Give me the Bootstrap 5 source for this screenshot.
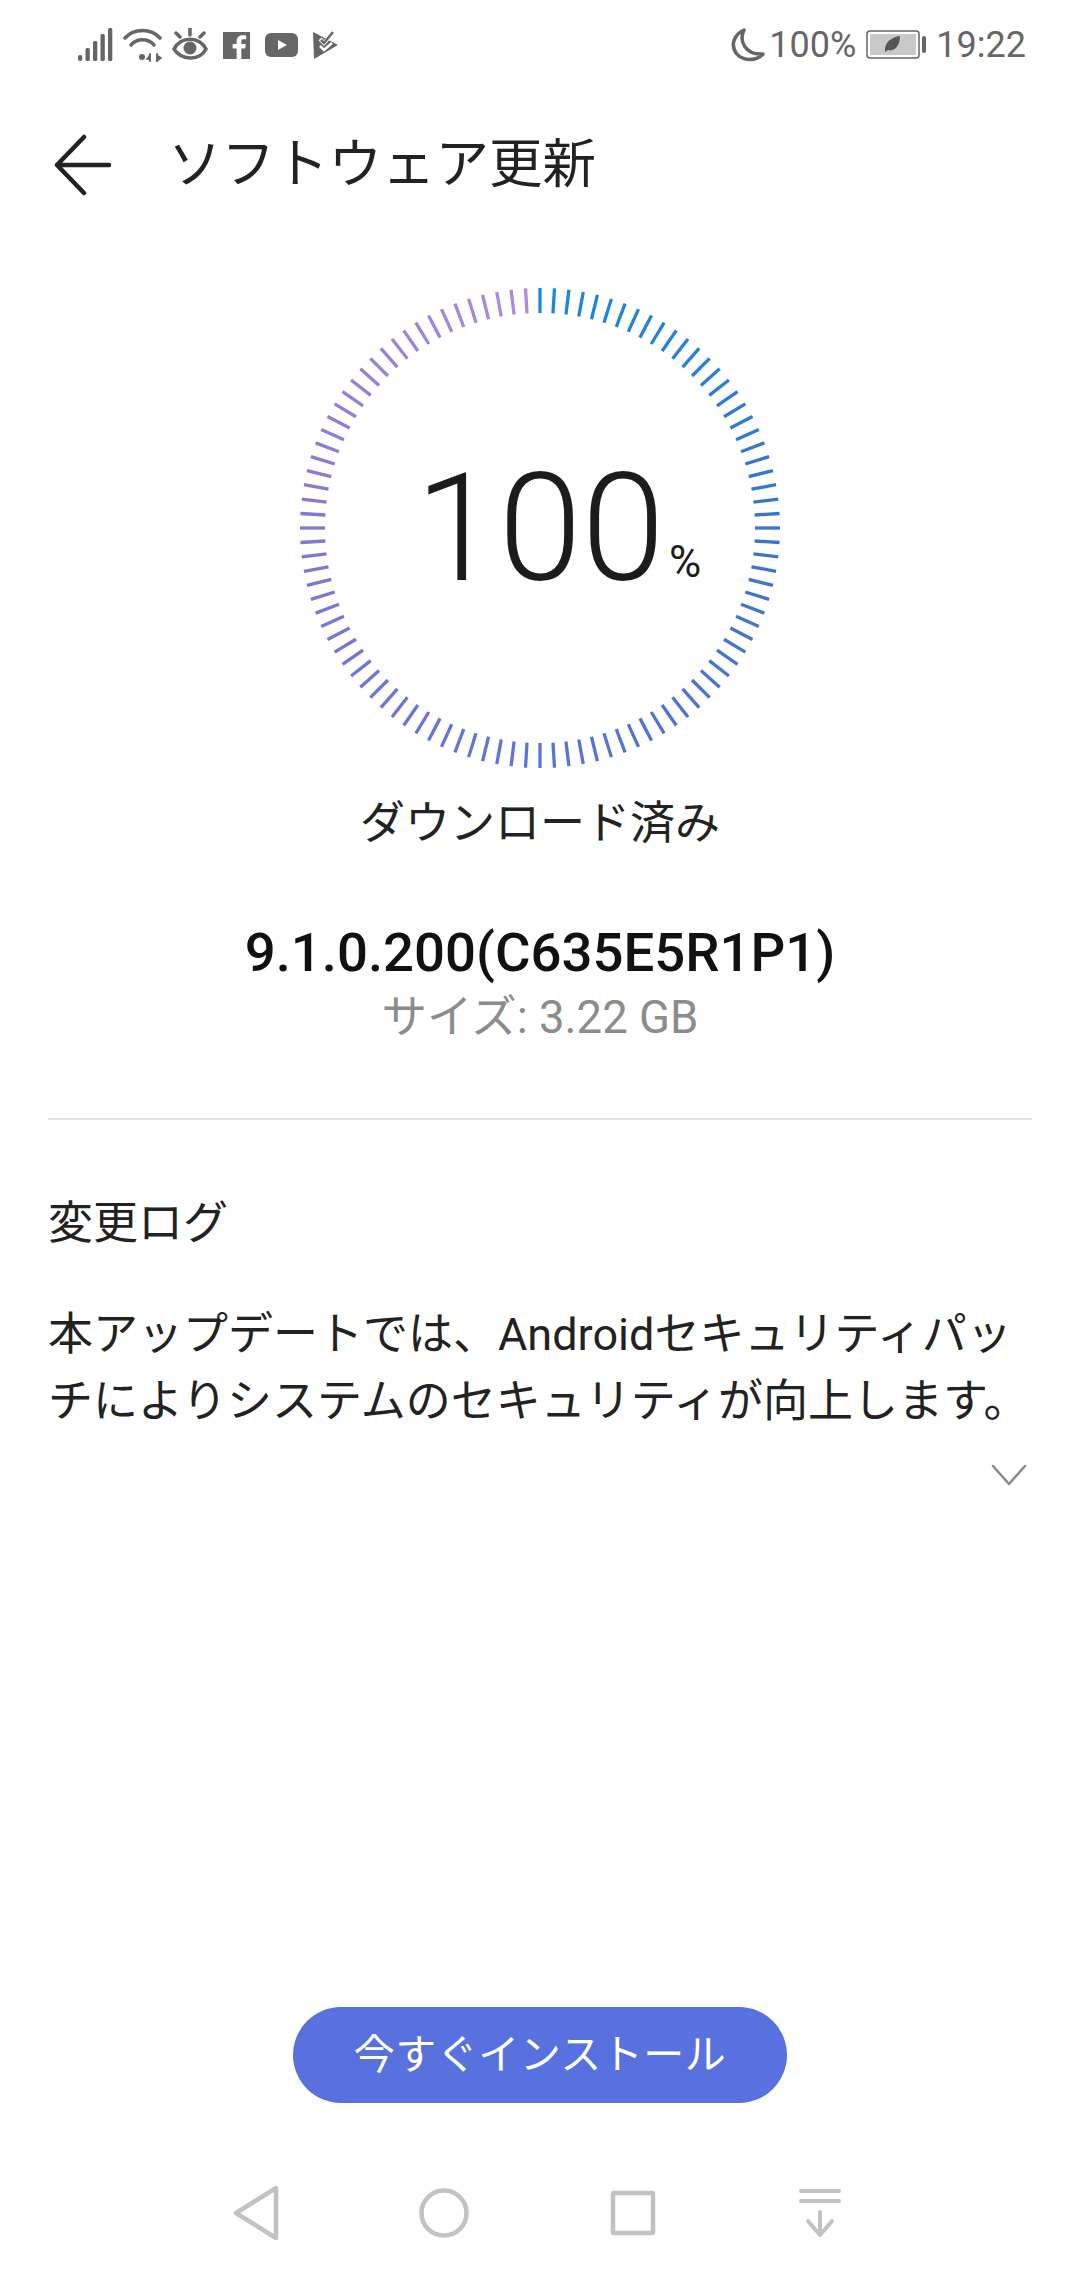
<!DOCTYPE html>
<html lang="ja">
<head>
    <meta charset="UTF-8">
    <meta name="viewport" content="width=device-width, initial-scale=1.0">
    <title>ソフトウェア更新</title>
    <link href="https://cdn.jsdelivr.net/npm/bootstrap@5.3.0/dist/css/bootstrap.min.css" rel="stylesheet">
    <style>
        html, body { height: 100%; }
        body {
            width: 1080px;
            height: 2280px;
            overflow: hidden;
            background: #fff;
            font-family: Roboto, "Noto Sans CJK JP", sans-serif;
            color: #1c1c1c;
        }
        .screen { height: 2280px; }
        .status-bar { height: 90px; padding: 22px 54px 0 78px; color: #666; font-size: 36px; line-height: 46px; }
        .status-side { height: 46px; }
        .gap-wide { margin-left: 15px; }
        .gap-thin { margin-left: 10px; }
        .gap-clock { margin-left: 8px; }
        .title-bar { height: 90px; padding-left: 53px; margin-top: 30px; }
        .title-text { font-size: 53.5px; margin-left: 55px; color: #222; }
        .ring-box { width: 500px; height: 500px; margin: 68px auto 0; position: relative; }
        .ring-value { position: absolute; left: 0; top: 0; width: 100%; height: 100%; display: flex; align-items: center; justify-content: center; }
        .ring-num { font-weight: 300; font-size: 150px; line-height: 1; color: #1c1c1c; margin-top: 2px; }
        .ring-pct { position: absolute; left: 379px; top: 262px; font-size: 44px; line-height: 1; font-weight: 400; }
        .dl-state { font-size: 45px; line-height: 60px; margin-top: 16px; text-align: center; color: #222; }
        .ver-name { font-size: 54.5px; font-weight: 500; line-height: 60px; margin-top: 68px; text-align: center; color: #111; }
        .ver-size { font-size: 45.5px; line-height: 56px; margin-top: 8px; text-align: center; color: #8c8c8c; }
        .split { border-top: 2px solid #e2e2e2; margin: 72px 48px 0 48px; }
        .log-head { font-size: 45px; line-height: 60px; margin: 74px 0 0 48px; color: #222; }
        .log-body { font-size: 45px; line-height: 67px; margin: 47px 37px 0 48px; color: #222; }
        .log-more { padding-right: 53px; margin-top: 29px; }
        .install-btn {
            width: 494px; height: 96px; border-radius: 48px; border: 0;
            background: #5871de; color: #fff; font-size: 41px; line-height: 96px; padding: 0;
            letter-spacing: .5px;
        }
        .install-wrap { margin-bottom: 57px; }
        .nav-bar { height: 120px; padding: 0 6px 15px 0; }
        .nav-gap { margin-left: 140px; }
        .nav-gap-home { margin-left: 136px; }
    </style>
</head>
<body>
<div class="screen d-flex flex-column">
    <!-- status bar -->
    <div class="status-bar d-flex justify-content-between">
        <div class="status-side d-flex align-items-center">
            <svg width="35" height="34" viewBox="0 0 35 34" fill="#666"><rect x="0" y="27" width="4.300" height="6" rx="2"/><rect x="7.500" y="20" width="4.300" height="13" rx="1.500"/><rect x="15" y="13" width="4.300" height="20" rx="1.500"/><rect x="22.500" y="6" width="4.300" height="27" rx="1.500"/><rect x="30" y="0" width="4.300" height="33" rx="1.500"/></svg>
            <svg class="gap-thin" width="39" height="34" viewBox="0 0 39 34" fill="none" stroke="#666" stroke-width="3.500" stroke-linecap="round"><path d="M2 10C11 0 28 0 37 10"/><path d="M8 17C14 10 25 10 31 17"/><circle cx="19" cy="29" r="3" fill="#666" stroke="none"/><path d="M27 26v7M34 26v7" stroke-width="2"/><path d="M27 31h-3l3-4M34 27l4 3-4 3" stroke-width="1.500" fill="#666"/></svg>
            <svg class="gap-thin" width="36" height="34" viewBox="0 0 36 34" fill="none" stroke="#666" stroke-width="3.500" stroke-linecap="round"><path d="M2 22C9 9 27 9 34 22C27 35 9 33 2 22Z" transform="translate(0 -1)"/><circle cx="18" cy="20" r="6.500" fill="#666" stroke="none"/><path d="M18 1v6M4 5l4 4M32 5l-4 4"/></svg>
            <svg class="gap-wide" width="27" height="27" viewBox="0 0 28 28"><path fill="#666" d="M0 0h28v28h-9V17h4l.6-4.500H19V9.800c0-1.300.4-2.200 2.300-2.200H24V3.600c-.5 0-2-.2-3.700-.2-3.700 0-6.200 2.200-6.200 6.300v2.800H10V17h4.100v11H0z"/></svg>
            <svg class="gap-wide" width="33" height="24" viewBox="0 0 33 24"><rect width="33" height="24" rx="6" fill="#666"/><path d="M13 7l9 5-9 5z" fill="#fff"/></svg>
            <svg class="gap-wide" width="25" height="28" viewBox="0 0 25 28"><path fill="#666" d="M0 1L25 14L1 28Z"/><path d="M7 8l4 4 10-11" fill="none" stroke="#fff" stroke-width="4"/><path d="M8 9l3 3 9-11" fill="none" stroke="#666" stroke-width="2.500"/><path d="M7 15l4 4 8-7" fill="none" stroke="#fff" stroke-width="2.500"/></svg>
        </div>
        <div class="status-side d-flex align-items-center">
            <svg width="34" height="34" viewBox="0 0 34 34" fill="none" stroke="#666" stroke-width="3.500"><path d="M13 2C8 12 13 27 32 26C26 33 12 34 5 25C-1 16 4 6 13 2Z" stroke-linejoin="round"/></svg>
            <span class="ms-1">100%</span>
            <svg class="gap-thin" width="62" height="30" viewBox="0 0 62 30"><rect x="1" y="1" width="52" height="27" rx="3" fill="none" stroke="#666" stroke-width="1.500"/><rect x="4" y="4" width="46" height="21" fill="#c9c9c9"/><path d="M19 22C18 13 25 7 34 6C34 16 28 22 22 20Z" fill="#555"/><rect x="56" y="6" width="4" height="17" rx="2" fill="#666"/></svg>
            <span class="gap-clock">19:22</span>
        </div>
    </div>

    <!-- title -->
    <div class="title-bar d-flex align-items-center">
        <svg width="60" height="62" viewBox="0 0 60 62" fill="none" stroke="#222" stroke-width="4.500" stroke-linecap="round" stroke-linejoin="round"><path d="M31 3L4 31L31 59M4 31H56"/></svg>
        <span class="title-text">ソフトウェア更新</span>
    </div>

    <!-- ring -->
    <div class="ring-box">
        <svg id="ring" width="500" height="500" viewBox="0 0 500 500"></svg>
        <div class="ring-value"><span class="ring-num">100</span></div>
        <span class="ring-pct">%</span>
    </div>

    <div class="dl-state">ダウンロード済み</div>
    <div class="ver-name">9.1.0.200(C635E5R1P1)</div>
    <div class="ver-size">サイズ: 3.22 GB</div>
    <div class="split"></div>

    <div class="log-head">変更ログ</div>
    <div class="log-body">本アップデートでは、Androidセキュリティパッチによりシステムのセキュリティが向上します。</div>
    <div class="log-more d-flex justify-content-end">
        <svg width="36" height="22" viewBox="0 0 36 22" fill="none" stroke="#888" stroke-width="2.500" stroke-linecap="round" stroke-linejoin="round"><path d="M2 2L18 20L34 2"/></svg>
    </div>

    <div class="install-wrap mt-auto d-flex justify-content-center">
        <button type="button" class="btn install-btn">今すぐインストール</button>
    </div>

    <!-- navigation bar -->
    <div class="nav-bar d-flex justify-content-center align-items-center">
        <svg width="50" height="58" viewBox="0 0 50 58" fill="none" stroke="#c2c2c2" stroke-width="4.500" stroke-linejoin="round"><path d="M44 4V54L4 29Z"/></svg>
        <svg class="nav-gap-home" width="52" height="52" viewBox="0 0 52 52" fill="none" stroke="#c2c2c2" stroke-width="4.500"><circle cx="26" cy="26" r="22.500"/></svg>
        <svg class="nav-gap" width="46" height="46" viewBox="0 0 46 46" fill="none" stroke="#c2c2c2" stroke-width="4.500" stroke-linejoin="round"><rect x="3" y="3" width="40" height="40" rx="1"/></svg>
        <svg class="nav-gap" width="46" height="50" viewBox="0 0 46 50" fill="none" stroke="#c2c2c2" stroke-width="4" stroke-linecap="round" stroke-linejoin="round"><path d="M5 3H43M5 13H43M24 24V47M12 33L24 47L36 33"/></svg>
    </div>
</div>

<script>
    // tick ring, 104 ticks going clockwise from the top
    var stops = [[0, [24, 138, 222]], [0.25, [58, 116, 205]], [0.5, [90, 116, 216]], [0.75, [128, 120, 212]], [1, [172, 140, 224]]];
    function tickColor(t) {
        for (var i = 1; i < stops.length; i++) {
            if (t <= stops[i][0]) {
                var a = stops[i - 1], b = stops[i], k = (t - a[0]) / (b[0] - a[0]);
                return 'rgb(' + a[1].map(function (v, j) { return Math.round(v + (b[1][j] - v) * k); }).join(',') + ')';
            }
        }
    }
    var html = '';
    for (var i = 0; i < 104; i++) {
        var deg = i * 360 / 104;
        html += '<line x1="250" y1="10" x2="250" y2="35" stroke-width="3.300" stroke="' + tickColor(i / 104) + '" transform="rotate(' + deg + ' 250 250)"/>';
    }
    document.getElementById('ring').innerHTML = html;
</script>
<script src="https://cdn.jsdelivr.net/npm/bootstrap@5.3.0/dist/js/bootstrap.bundle.min.js"></script>
</body>
</html>
